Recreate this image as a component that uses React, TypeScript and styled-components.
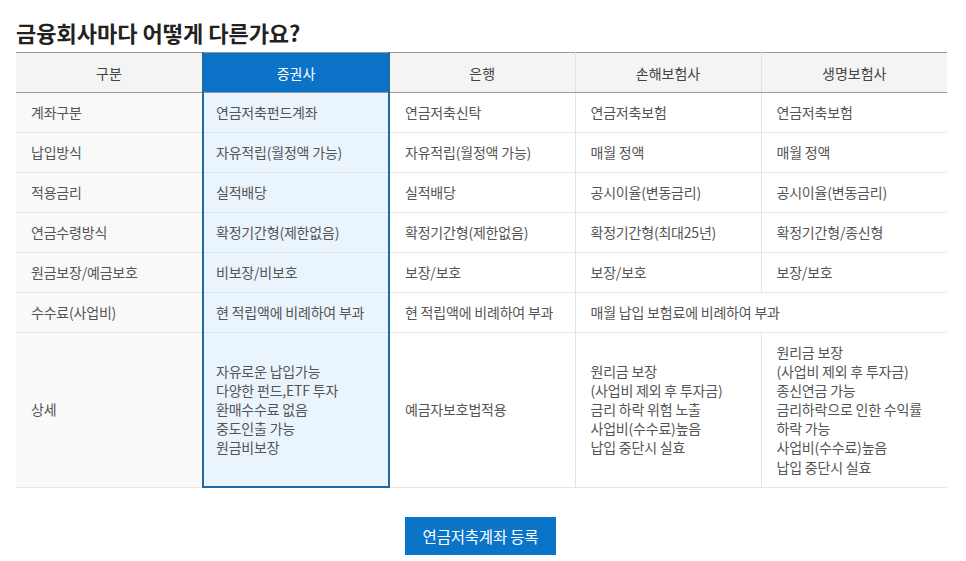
import React from "react";
import styled, { createGlobalStyle } from "styled-components";

const Global = createGlobalStyle`
  html, body { margin: 0; padding: 0; background: #fff; }
  body { font-family: "Noto Sans CJK KR", "Noto Sans", sans-serif; }
`;

const Page = styled.div`
  padding: 16px 19px 0 16px;
  width: 931px;
`;

const Title = styled.h2`
  margin: 0 0 4px 0;
  font-size: 22px;
  line-height: 32px;
  font-weight: 700;
  color: #222;
  letter-spacing: 0;
`;

const Table = styled.table`
  width: 931px;
  border-collapse: collapse;
  table-layout: fixed;
  font-size: 14px;
  color: #555;
  letter-spacing: -0.2px;
`;

const Col = styled.col<{ $w: number }>`
  width: ${(p) => p.$w}px;
`;

const Th = styled.th<{ $hl?: boolean }>`
  height: 39px;
  padding: 0;
  font-weight: 400;
  letter-spacing: 0;
  text-align: center;
  background: ${(p) => (p.$hl ? "#0a73c8" : "#f4f4f5")};
  color: ${(p) => (p.$hl ? "#fff" : "#444")};
  border-top: 1px solid #9a9a9a;
  border-bottom: 1px solid #9a9a9a;
  border-left: ${(p) => (p.$hl ? "2px solid #1f6aa5" : "1px solid #e2e2e2")};
  border-right: ${(p) => (p.$hl ? "2px solid #1f6aa5" : "1px solid #e2e2e2")};
  &:first-child { border-left: none; }
  &:last-child { border-right: none; }
`;

const Td = styled.td<{ $hl?: boolean; $label?: boolean; $last?: boolean; $multi?: boolean }>`
  height: 39px;
  padding: ${(p) => (p.$multi ? "10px 15px" : "0 15px")};
  padding-left: ${(p) => (p.$hl ? "12px" : "15px")};
  line-height: ${(p) => (p.$multi ? "19.1px" : "19px")};
  vertical-align: middle;
  text-align: left;
  background: ${(p) => (p.$hl ? "#eaf4fc" : p.$label ? "#f9f9f9" : "#fff")};
  border-bottom: ${(p) => (p.$hl && p.$last ? "2px solid #1f6aa5" : "1px solid #e6e6e6")};
  border-left: ${(p) => (p.$hl ? "2px solid #1f6aa5" : "1px solid #e2e2e2")};
  border-right: ${(p) => (p.$hl ? "2px solid #1f6aa5" : "1px solid #e2e2e2")};
  &:first-child { border-left: none; }
  &:last-child { border-right: none; }
`;

const Line = styled.div``;

const ButtonRow = styled.div`
  display: flex;
  justify-content: center;
  padding-top: 29px;
  padding-right: 2px;
`;

const Button = styled.button`
  width: 151px;
  height: 38px;
  border: none;
  background: #0a74c9;
  color: #fff;
  font-family: inherit;
  font-size: 15.5px;
  letter-spacing: -0.2px;
  cursor: pointer;
`;

const headers = ["구분", "증권사", "은행", "손해보험사", "생명보험사"];
const widths = [187, 186, 186, 186, 186];

type Row = { label: string; cells: (string | string[])[]; span?: boolean };

const rows: Row[] = [
  { label: "계좌구분", cells: ["연금저축펀드계좌", "연금저축신탁", "연금저축보험", "연금저축보험"] },
  { label: "납입방식", cells: ["자유적립(월정액 가능)", "자유적립(월정액 가능)", "매월 정액", "매월 정액"] },
  { label: "적용금리", cells: ["실적배당", "실적배당", "공시이율(변동금리)", "공시이율(변동금리)"] },
  { label: "연금수령방식", cells: ["확정기간형(제한없음)", "확정기간형(제한없음)", "확정기간형(최대25년)", "확정기간형/종신형"] },
  { label: "원금보장/예금보호", cells: ["비보장/비보호", "보장/보호", "보장/보호", "보장/보호"] },
  { label: "수수료(사업비)", cells: ["현 적립액에 비례하여 부과", "현 적립액에 비례하여 부과", "매월 납입 보험료에 비례하여 부과"], span: true },
  {
    label: "상세",
    cells: [
      ["자유로운 납입가능", "다양한 펀드,ETF 투자", "환매수수료 없음", "중도인출 가능", "원금비보장"],
      "예금자보호법적용",
      ["원리금 보장", "(사업비 제외 후 투자금)", "금리 하락 위험 노출", "사업비(수수료)높음", "납입 중단시 실효"],
      ["원리금 보장", "(사업비 제외 후 투자금)", "종신연금 가능", "금리하락으로 인한 수익률", "하락 가능", "사업비(수수료)높음", "납입 중단시 실효"],
    ],
  },
];

const Content = ({ v }: { v: string | string[] }) =>
  Array.isArray(v) ? (
    <>
      {v.map((l, i) => (
        <Line key={i}>{l}</Line>
      ))}
    </>
  ) : (
    <>{v}</>
  );

export default function App() {
  return (
    <>
      <Global />
      <Page>
        <Title>금융회사마다 어떻게 다른가요?</Title>
        <Table>
          <colgroup>
            {widths.map((w, i) => (
              <Col key={i} $w={w} />
            ))}
          </colgroup>
          <thead>
            <tr>
              {headers.map((h, i) => (
                <Th key={h} $hl={i === 1}>
                  {h}
                </Th>
              ))}
            </tr>
          </thead>
          <tbody>
            {rows.map((r, ri) => {
              const last = ri === rows.length - 1;
              return (
                <tr key={r.label}>
                  <Td $label $multi={last}>{r.label}</Td>
                  {r.cells.map((c, ci) => (
                    <Td
                      key={ci}
                      $hl={ci === 0}
                      $last={last}
                      $multi={last}
                      colSpan={r.span && ci === 2 ? 2 : undefined}
                    >
                      <Content v={c} />
                    </Td>
                  ))}
                </tr>
              );
            })}
          </tbody>
        </Table>
        <ButtonRow>
          <Button>연금저축계좌 등록</Button>
        </ButtonRow>
      </Page>
    </>
  );
}
